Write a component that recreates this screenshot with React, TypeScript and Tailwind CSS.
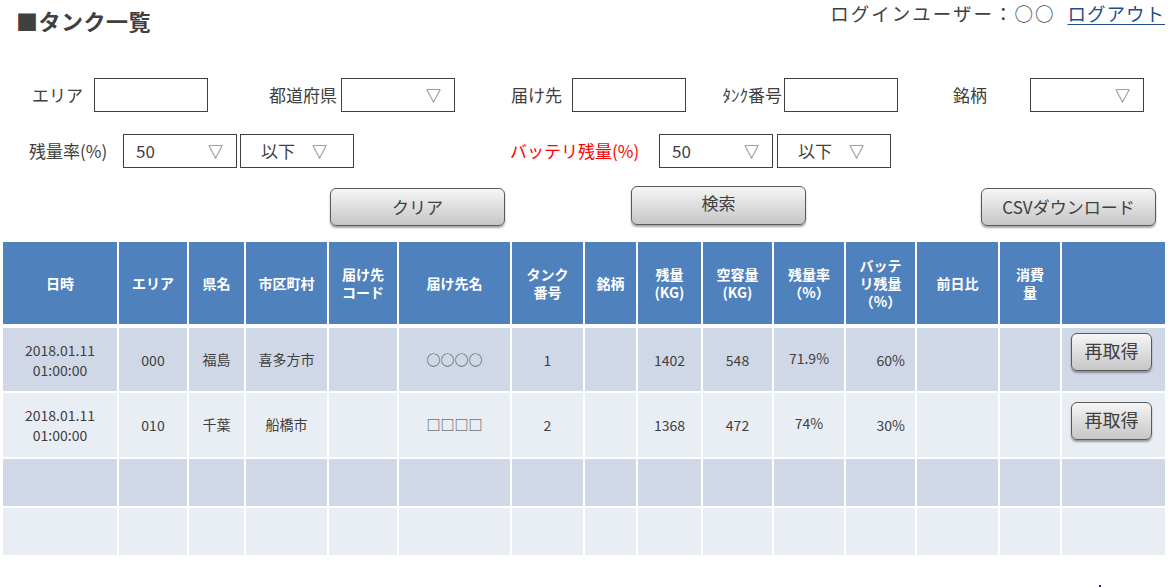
import React from "react";

const FONT = { fontFamily: '"Noto Sans CJK JP", "Noto Sans", sans-serif' };

function Box() {
  return <div className="h-[34px] w-[114px] shrink-0 border border-[#404040] bg-white" />;
}

function Sel({ value }: { value?: string }) {
  return (
    <div className="flex h-[34px] w-[114px] shrink-0 items-center justify-between border border-[#404040] bg-white pl-[12px] pr-[13px] text-[17px] text-[#404040]">
      <span>{value ?? ""}</span>
      <span className="text-[15px] text-[#555]">▽</span>
    </div>
  );
}

function Sel2() {
  return (
    <div className="flex h-[34px] w-[114px] shrink-0 items-center border border-[#404040] bg-white pl-[20px] text-[17px] text-[#404040]">
      <span>以下</span>
      <span className="ml-[17px] text-[15px] text-[#555]">▽</span>
    </div>
  );
}

function Btn({ children, w, h, mt, size }: { children: React.ReactNode; w: string; h: string; mt?: string; size: string }) {
  return (
    <div
      className={`flex shrink-0 items-center justify-center rounded-[6px] border border-[#5a5a5a] bg-linear-to-b from-[#f6f6f6] to-[#c6c6c6] text-[#404040] shadow-[0_2px_2px_rgba(0,0,0,0.35)] ${w} ${h} ${mt ?? ""} ${size}`}
    >
      {children}
    </div>
  );
}

const COLS = "grid grid-cols-[114px_68px_55px_81px_68px_111px_71px_51px_63px_69px_70px_69px_81px_60px_103px] gap-x-[2px]";

const headers: React.ReactNode[] = [
  "日時",
  "エリア",
  "県名",
  "市区町村",
  <>届け先<br />コード</>,
  "届け先名",
  <>タンク<br />番号</>,
  "銘柄",
  <>残量<br />(KG)</>,
  <>空容量<br />(KG)</>,
  <>残量率<br />（%）</>,
  <>バッテ<br />リ残量<br />（%）</>,
  "前日比",
  <>消費<br />量</>,
  "",
];

type Row = { cells: React.ReactNode[]; bg: string; h: string; btn: boolean; btnPt: string };

const rows: Row[] = [
  {
    cells: [
      <>2018.01.11<br />01:00:00</>,
      "000",
      "福島",
      "喜多方市",
      "",
      "○○○○",
      "1",
      "",
      "1402",
      "548",
      "71.9%",
      "60%",
      "",
      "",
    ],
    bg: "bg-[#D0D8E8]",
    h: "h-[63px]",
    btn: true,
    btnPt: "pt-[5px]",
  },
  {
    cells: [
      <>2018.01.11<br />01:00:00</>,
      "010",
      "千葉",
      "船橋市",
      "",
      "□□□□",
      "2",
      "",
      "1368",
      "472",
      "74%",
      "30%",
      "",
      "",
    ],
    bg: "bg-[#E9EDF4]",
    h: "h-[64px]",
    btn: true,
    btnPt: "pt-[9px]",
  },
  { cells: Array(14).fill(""), bg: "bg-[#D0D8E8]", h: "h-[47px]", btn: false, btnPt: "" },
  { cells: Array(14).fill(""), bg: "bg-[#E9EDF4]", h: "h-[47px]", btn: false, btnPt: "" },
];

export default function App() {
  return (
    <div className="h-[588px] w-[1172px] overflow-hidden bg-white text-[#404040]" style={FONT}>
      {/* top bar */}
      <div className="flex items-start justify-between">
        <div className="mt-[6px] pl-[16px] text-[22px] font-bold leading-[28px] tracking-[0.5px] text-[#404040]">
          ■タンク一覧
        </div>
        <div className="mt-[1px] flex pr-[7px] text-[18.5px] leading-[24px] text-[#404040]">
          <span className="tracking-[2px]">ログインユーザー：○○</span>
          <span className="ml-[12px] tracking-[1px] text-[#1F4E8C] underline underline-offset-[3px]">ログアウト</span>
        </div>
      </div>

      {/* filter row 1 */}
      <div className="mt-[44px] flex h-[34px] items-center pl-[32px] text-[17px]">
        <span className="w-[62px] shrink-0">エリア</span>
        <Box />
        <span className="w-[133px] shrink-0 pr-[4px] text-right">都道府県</span>
        <Sel />
        <span className="w-[117px] shrink-0 pr-[10px] text-right">届け先</span>
        <Box />
        <span className="w-[98px] shrink-0 pr-[2px] text-right">ﾀﾝｸ番号</span>
        <Box />
        <span className="w-[132px] shrink-0 pl-[55px]">銘柄</span>
        <Sel />
      </div>

      {/* filter row 2 */}
      <div className="mt-[22px] flex h-[34px] items-center pl-[29px] text-[17px]">
        <span className="w-[94px] shrink-0">残量率(%)</span>
        <Sel value="50" />
        <div className="ml-[3px]">
          <Sel2 />
        </div>
        <span className="ml-[156px] w-[149px] shrink-0 text-[#FF0000]">バッテリ残量(%)</span>
        <Sel value="50" />
        <div className="ml-[4px]">
          <Sel2 />
        </div>
      </div>

      {/* buttons */}
      <div className="mt-[18px] flex h-[40px] items-start">
        <div className="ml-[330px]">
          <Btn w="w-[175px]" h="h-[38px]" mt="mt-[2px]" size="text-[17px]">
            クリア
          </Btn>
        </div>
        <div className="ml-[126px]">
          <Btn w="w-[175px]" h="h-[39px]" size="text-[17px]">
            <span className="-mt-[6px]">検索</span>
          </Btn>
        </div>
        <div className="ml-[175px]">
          <Btn w="w-[175px]" h="h-[38px]" mt="mt-[2px]" size="text-[17px]">
            CSVダウンロード
          </Btn>
        </div>
      </div>

      {/* table */}
      <div className="ml-[3px] mt-[16px] w-[1162px]">
        <div className={`${COLS} h-[82px]`}>
          {headers.map((h, i) => (
            <div
              key={i}
              className="flex items-center justify-center bg-[#4F81BD] text-center text-[14px] font-bold leading-[18px] text-white"
            >
              <div>{h}</div>
            </div>
          ))}
        </div>
        <div className="mt-[4px] flex flex-col gap-y-[2px]">
          {rows.map((r, ri) => (
            <div key={ri} className={`${COLS} ${r.h}`}>
              {r.cells.map((c, ci) => (
                <div
                  key={ci}
                  className={`flex items-center ${r.bg} text-[14px] leading-[20px] text-[#404040] ${
                    ci === 11 ? "justify-end pr-[10px]" : "justify-center text-center"
                  } ${ci === 10 ? "pb-[4px]" : ""} ${ci === 2 || ci === 3 || ci === 5 ? "pb-[2px]" : ""}`}
                >
                  <div>{c}</div>
                </div>
              ))}
              <div className={`flex items-start ${r.bg} pl-[9px] ${r.btnPt}`}>
                {r.btn && (
                  <Btn w="w-[81px]" h="h-[38px]" size="text-[18px]">
                    <span className="-mt-[3px]">再取得</span>
                  </Btn>
                )}
              </div>
            </div>
          ))}
        </div>
      </div>

      {/* bottom clipped marker */}
      <div className="ml-[1099px] mt-[30px] h-[2px] w-[2px] bg-[#1a1aff]" />
    </div>
  );
}
